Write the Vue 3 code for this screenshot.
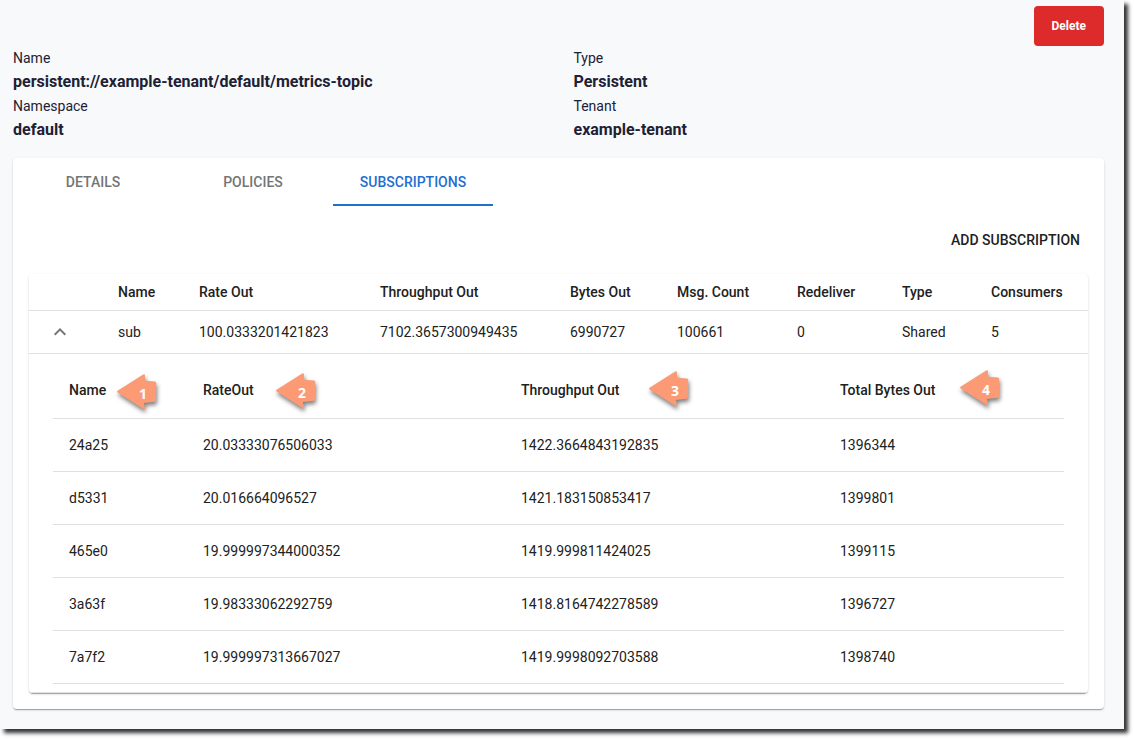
<script setup>
const facts = [
  { label: 'Name', value: 'persistent://example-tenant/default/metrics-topic' },
  { label: 'Type', value: 'Persistent' },
  { label: 'Namespace', value: 'default' },
  { label: 'Tenant', value: 'example-tenant' },
]

const tabs = ['Details', 'Policies', 'Subscriptions']
const activeTab = 'Subscriptions'

const columns = [
  { key: 'name', label: 'Name' },
  { key: 'rate', label: 'Rate Out' },
  { key: 'throughput', label: 'Throughput Out' },
  { key: 'bytes', label: 'Bytes Out' },
  { key: 'count', label: 'Msg. Count' },
  { key: 'redeliver', label: 'Redeliver' },
  { key: 'type', label: 'Type' },
  { key: 'consumers', label: 'Consumers' },
]

const subscription = {
  name: 'sub',
  rate: '100.0333201421823',
  throughput: '7102.3657300949435',
  bytes: '6990727',
  count: '100661',
  redeliver: '0',
  type: 'Shared',
  consumers: '5',
}

const consumerColumns = [
  { key: 'c-name', label: 'Name', marker: 1 },
  { key: 'c-rate', label: 'RateOut', marker: 2 },
  { key: 'c-throughput', label: 'Throughput Out', marker: 3 },
  { key: 'c-bytes', label: 'Total Bytes Out', marker: 4 },
]

const consumers = [
  ['24a25', '20.03333076506033', '1422.3664843192835', '1396344'],
  ['d5331', '20.016664096527', '1421.183150853417', '1399801'],
  ['465e0', '19.999997344000352', '1419.999811424025', '1399115'],
  ['3a63f', '19.98333062292759', '1418.8164742278589', '1396727'],
  ['7a7f2', '19.999997313667027', '1419.9998092703588', '1398740'],
]
</script>

<template>
  <main class="page">
    <div class="toolbar">
      <button type="button" class="delete">Delete</button>
    </div>

    <dl class="facts">
      <div v-for="fact in facts" :key="fact.label">
        <dt>{{ fact.label }}</dt>
        <dd>{{ fact.value }}</dd>
      </div>
    </dl>

    <section class="card">
      <div class="tabs" role="tablist">
        <button
          v-for="tab in tabs"
          :key="tab"
          type="button"
          role="tab"
          class="tab"
          :class="{ active: tab === activeTab }"
          :aria-selected="tab === activeTab"
        >{{ tab }}</button>
      </div>

      <div class="panel" role="tabpanel">
        <div class="actions">
          <button type="button" class="add">Add subscription</button>
        </div>

        <div class="sheet">
          <table class="outer">
            <colgroup>
              <col class="toggle">
              <col v-for="c in columns" :key="c.key" :class="c.key">
            </colgroup>
            <thead>
              <tr>
                <td></td>
                <th v-for="c in columns" :key="c.key" scope="col">{{ c.label }}</th>
              </tr>
            </thead>
            <tbody>
              <tr>
                <td>
                  <button type="button" class="collapse" aria-label="Collapse row">
                    <svg viewBox="0 0 24 24" aria-hidden="true">
                      <path d="M7.41 15.41 12 10.83l4.59 4.58L18 14l-6-6-6 6z" />
                    </svg>
                  </button>
                </td>
                <td v-for="c in columns" :key="c.key">{{ subscription[c.key] }}</td>
              </tr>
              <tr>
                <td colspan="9" class="expanded">
                  <table class="inner">
                    <colgroup>
                      <col v-for="c in consumerColumns" :key="c.key" :class="c.key">
                    </colgroup>
                    <thead>
                      <tr>
                        <th v-for="c in consumerColumns" :key="c.key" scope="col">
                          {{ c.label }}
                          <span class="marker" :class="'marker-' + c.marker">
                            <svg viewBox="0 0 40 36" aria-hidden="true">
                              <path d="M0.6 16.8 26.2 0.6Q28 -0.4 27.9 1.4L28.2 6.8 38 7.6Q39.2 7.8 39.2 9L39 26.6Q39 27.8 37.8 27.8L26.8 29 28 33.8Q28.2 35.8 26.4 35L0.6 18.4Q-0.4 17.6 0.6 16.8Z" />
                            </svg>
                            <b>{{ c.marker }}</b>
                          </span>
                        </th>
                      </tr>
                    </thead>
                    <tbody>
                      <tr v-for="row in consumers" :key="row[0]">
                        <td v-for="value in row" :key="value">{{ value }}</td>
                      </tr>
                    </tbody>
                  </table>
                </td>
              </tr>
            </tbody>
          </table>
        </div>
      </div>
    </section>
  </main>
</template>

<style>
body {
  background: #fff;
}
</style>

<style scoped>
.page {
  box-sizing: border-box;
  margin: 0 10px 10px 0;
  padding: 6px 20px 20px 13px;
  background: #f8f9fb;
  box-shadow: 4px 4px 4px #333;
  font-family: Roboto, "Liberation Sans", sans-serif;
  font-size: 14px;
  line-height: 24px;
  color: #212121;
}

button {
  border: 0;
  background: none;
  font: inherit;
  cursor: pointer;
}

.toolbar,
.actions {
  display: flex;
  justify-content: flex-end;
}

.delete {
  padding: 8px 18px;
  border-radius: 4px;
  background: #dd2b2b;
  color: #fff;
  font-size: 12px;
  font-weight: 700;
}

.facts {
  display: grid;
  grid-template-columns: 1fr 1fr;
  column-gap: 30px;
  margin: 0 0 16px;
  color: #1c2136;
}

.facts dd {
  margin: 0;
  font-size: 16px;
  font-weight: 700;
}

.card,
.sheet {
  border-radius: 4px;
  background: #fff;
  box-shadow: 0 2px 1px -1px rgba(0, 0, 0, 0.2), 0 1px 1px rgba(0, 0, 0, 0.14),
    0 1px 3px rgba(0, 0, 0, 0.12);
}

.tabs {
  display: flex;
}

.tab {
  width: 160px;
  height: 48px;
  padding: 0;
  border-bottom: 2px solid transparent;
  border-top: 2px solid transparent;
  color: #757575;
  font-weight: 500;
  text-transform: uppercase;
}

.tab.active {
  border-bottom-color: #1f6fd0;
  color: #1f6fd0;
}

.panel {
  padding: 16px;
}

.actions {
  margin-bottom: 16px;
}

.add {
  padding: 6px 8px;
  color: #212121;
  font-weight: 500;
  text-transform: uppercase;
}

table {
  width: 100%;
  border-collapse: separate;
  border-spacing: 0;
  table-layout: fixed;
}

th,
td {
  padding: 6px 16px;
  border-bottom: 1px solid #e0e0e0;
  text-align: left;
  font-weight: 400;
  white-space: nowrap;
}

th {
  font-weight: 500;
}

.toggle { width: 73px; }
.name { width: 81px; }
.rate { width: 181px; }
.throughput { width: 190px; }
.bytes { width: 107px; }
.count { width: 120px; }
.redeliver { width: 105px; }
.type { width: 89px; }
.consumers { width: 113px; }

.c-name { width: 134px; }
.c-rate { width: 318px; }
.c-throughput { width: 319px; }
.c-bytes { width: 240px; }

.collapse {
  display: block;
  padding: 3px;
}

.collapse svg {
  display: block;
  width: 24px;
  height: 24px;
  fill: #757575;
}

.expanded {
  padding: 8px 24px;
}

.inner th,
.inner td {
  padding: 14px 16px;
}

.inner th {
  position: relative;
  padding: 16px;
}

.marker {
  position: absolute;
  width: 40px;
  height: 36px;
}

.marker svg {
  display: block;
  width: 40px;
  height: 36px;
  overflow: visible;
  fill: #fb9a75;
  filter: drop-shadow(1px 3px 2px rgba(0, 0, 0, 0.5));
}

.marker b {
  position: absolute;
  inset: 2px 0 0 12px;
  color: #fff;
  font-family: "Open Sans", "Noto Sans", sans-serif;
  font-size: 14px;
  font-weight: 700;
  line-height: 36px;
  text-align: center;
}

.marker-1 { top: 12px; left: 64px; }
.marker-2 { top: 11px; left: 89px; }
.marker-3 { top: 9px; left: 144px; }
.marker-4 { top: 8px; left: 136px; }
</style>
